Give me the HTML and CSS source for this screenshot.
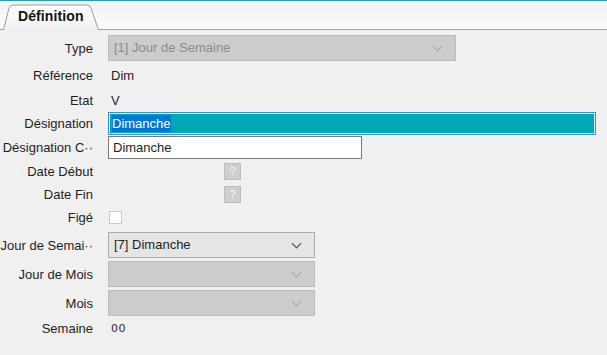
FILE: index.html
```html
<!DOCTYPE html>
<html lang="fr">
<head>
    <meta charset="UTF-8">
    <title>Définition</title>
    <link rel="stylesheet" href="styles.css">
</head>
<body>

<div id="onglets">
    <div class="onglet actif">
        <svg class="forme" width="98" height="26" viewBox="0 0 98 26">
            <path d="M0.5 26 L6 4 Q7 1 10 1 L84 1 Q87 1 88 4 L95.5 26" fill="url(#g)" stroke="#9c9c9c"/>
            <defs>
                <linearGradient id="g" x1="0" y1="0" x2="0" y2="1">
                    <stop offset="0" stop-color="#ffffff"/>
                    <stop offset="1" stop-color="#f0f0f0"/>
                </linearGradient>
            </defs>
        </svg>
        <span>Définition</span>
    </div>
    <div class="ligne"></div>
</div>

<div id="fiche">
    <div class="rang haut">
        <label>Type</label>
        <div class="combo inactif large">[1] Jour de Semaine<i class="fleche"></i></div>
    </div>
    <div class="rang">
        <label>Référence</label>
        <span class="valeur">Dim</span>
    </div>
    <div class="rang">
        <label>Etat</label>
        <span class="valeur">V</span>
    </div>
    <div class="rang champ">
        <label>Désignation</label>
        <div class="saisie focus"><span class="selection">Dimanche</span></div>
    </div>
    <div class="rang champ">
        <label>Désignation C··</label>
        <div class="saisie blanc">Dimanche</div>
    </div>
    <div class="rang">
        <label>Date Début</label>
        <span class="aide">?</span>
    </div>
    <div class="rang">
        <label>Date Fin</label>
        <span class="aide">?</span>
    </div>
    <div class="rang">
        <label>Figé</label>
        <span class="case"></span>
    </div>
    <div class="rang haut ecart">
        <label>Jour de Semai··</label>
        <div class="combo actif">[7] Dimanche<i class="fleche"></i></div>
    </div>
    <div class="rang haut ecart-petit">
        <label>Jour de Mois</label>
        <div class="combo inactif"><i class="fleche"></i></div>
    </div>
    <div class="rang haut ecart-petit">
        <label>Mois</label>
        <div class="combo inactif"><i class="fleche"></i></div>
    </div>
    <div class="rang">
        <label>Semaine</label>
        <span class="valeur chiffres">00</span>
    </div>
</div>

</body>
</html>
```

FILE: styles.css
```css
body {
    margin: 0;
    background-color: #f0f0f0;
    font-family: "Liberation Sans", Arial, sans-serif;
    font-size: 13px;
    color: #1e1e1e;
    width: 607px;
    height: 355px;
    overflow: hidden;
}
#onglets {
    border-top: 1px solid #1fa3b3;
    height: 29px;
    background: linear-gradient(to bottom, #f2f2f2, #fbfbfb);
    display: flex;
    align-items: flex-end;
    padding-left: 3px;
}
.onglet {
    position: relative;
    width: 96px;
    height: 26px;
    flex: none;
}
.onglet .forme {
    position: absolute;
    left: 0;
    top: 0;
}
.onglet span {
    position: relative;
    display: block;
    padding: 4px 0 0 15px;
    font-weight: bold;
    font-size: 14px;
    letter-spacing: 0.1px;
    color: #141414;
}
.ligne {
    flex: 1;
    border-bottom: 1px solid #a2a2a2;
}
#onglets::before {
    content: "";
    position: absolute;
    left: 0;
    top: 29px;
    width: 4px;
    border-bottom: 1px solid #a2a2a2;
}
#fiche {
    display: flex;
    flex-direction: column;
    gap: 1px;
    padding-top: 5px;
}
.rang {
    display: flex;
    align-items: center;
    height: 22px;
}
.rang.haut {
    height: 26px;
}
.rang.champ {
    height: 23px;
}
.rang:nth-child(2),
.rang:nth-child(3) {
    height: 24px;
    padding-top: 3px;
    box-sizing: border-box;
}
.rang.ecart {
    margin-top: 3px;
}
.rang.ecart-petit {
    margin-top: 2px;
}
.rang label {
    width: 93px;
    text-align: right;
    margin-right: 15px;
    white-space: nowrap;
    color: #1e1e1e;
    flex: none;
}
.valeur {
    padding-left: 3px;
}
.chiffres {
    font-family: "DejaVu Sans", sans-serif;
    font-size: 11px;
    color: #2a2a40;
    letter-spacing: 0.5px;
}
.combo {
    position: relative;
    box-sizing: border-box;
    width: 207px;
    height: 26px;
    line-height: 24px;
    padding-left: 5px;
    border: 1px solid #bcbcbc;
    background-color: #cccccc;
}
.combo.large {
    width: 348px;
}
.combo.inactif {
    color: #8a8a8a;
}
.combo.actif {
    background-color: #e5e5e5;
    border-color: #acacac;
    color: #1e1e1e;
}
.fleche {
    position: absolute;
    right: 14px;
    top: 7px;
    width: 6px;
    height: 6px;
    border-right: 1px solid #a8a8a8;
    border-bottom: 1px solid #a8a8a8;
    transform: rotate(45deg);
}
.combo.actif .fleche {
    border-color: #404040;
    border-width: 0 1.5px 1.5px 0;
}
.saisie {
    box-sizing: border-box;
    height: 23px;
    line-height: 19px;
    padding-left: 3px;
}
.saisie.focus {
    width: 488px;
    background-color: #00a8b4;
    border: 1px solid #3b8fe3;
    box-shadow: inset 0 0 0 1px #d9ecff;
    padding-top: 1px;
}
.saisie.blanc {
    width: 254px;
    height: 23px;
    line-height: 21px;
    background-color: #ffffff;
    border: 1px solid #7a7a7a;
    padding-left: 4px;
}
.selection {
    background-color: #0078d7;
    color: #ffffff;
    padding: 1px 0;
}
.aide {
    display: inline-block;
    box-sizing: border-box;
    width: 17px;
    height: 17px;
    margin-left: 116px;
    background-color: #cfcfcf;
    border: 1px solid #bdbdbd;
    color: #f4f4f4;
    font-size: 11px;
    line-height: 15px;
    text-align: center;
}
.case {
    display: inline-block;
    box-sizing: border-box;
    width: 13px;
    height: 13px;
    margin-left: 1px;
    background-color: #ffffff;
    border: 1px solid #c8c8c8;
}
```
